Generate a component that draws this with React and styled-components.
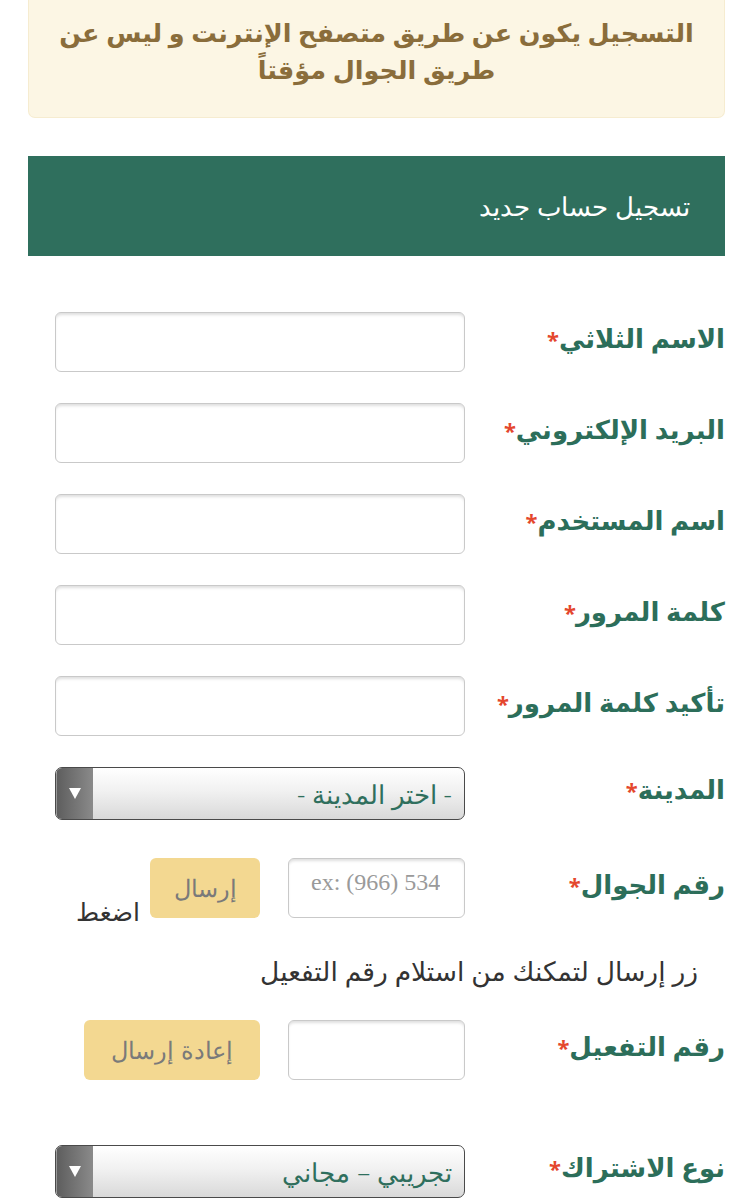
import React from 'react';
import styled, { createGlobalStyle } from 'styled-components';

const GlobalStyle = createGlobalStyle`
  body {
    margin: 0;
    background: #ffffff;
    font-family: "Noto Sans", "DejaVu Sans", sans-serif;
    direction: rtl;
  }
`;

const Page = styled.div`
  width: 697px;
  margin: 0 28px;
`;

const Notice = styled.div`
  background: #fcf6e4;
  border: 1px solid #f6ecd0;
  border-top: none;
  border-radius: 0 0 7px 7px;
  color: #8a6d3b;
  font-weight: bold;
  font-size: 25.5px;
  line-height: 37px;
  text-align: center;
  padding: 14px 26px 29px;
`;

const PanelHead = styled.div`
  margin-top: 38px;
  height: 100px;
  background: #2f6f5d;
  color: #ffffff;
  font-size: 26px;
  font-weight: 300;
  display: flex;
  align-items: center;
  padding-right: 35px;
`;

const Form = styled.div`
  padding-top: 56px;
`;

const Row = styled.div`
  display: flex;
  align-items: ${(p) => (p.$bottom ? 'flex-end' : 'center')};
  margin-bottom: ${(p) => p.$space ?? 31}px;
`;

const Label = styled.label`
  width: 260px;
  flex-shrink: 0;
  color: #2c6e5a;
  font-weight: bold;
  font-size: 26px;
  line-height: 34px;
  align-self: center;
  margin-top: -8px;
`;

const Star = styled.span`
  color: #e4472d;
  font-size: 22px;
`;

const Input = styled.input`
  box-sizing: border-box;
  width: ${(p) => p.$w || 410}px;
  height: 60px;
  border: 1px solid #c9c9c9;
  border-radius: 6px;
  box-shadow: inset 0 3px 3px -1px rgba(0, 0, 0, 0.13);
  padding: 0 24px 12px 22px;
  font-family: "Liberation Serif", serif;
  font-size: 24px;
  direction: ltr;
  text-align: left;
  outline: none;
  &::placeholder {
    color: #9a9a9a;
  }
`;

const Select = styled.div`
  box-sizing: border-box;
  width: 410px;
  height: 53px;
  border: 1.5px solid #4a4a4a;
  border-radius: 7px;
  background: linear-gradient(#ffffff, #f1f1f1 45%, #d9d9d9);
  display: flex;
  align-items: center;
  overflow: hidden;
`;

const SelectText = styled.span`
  flex: 1;
  color: #2f6f5d;
  font-size: 26px;
  font-weight: 300;
  padding-right: 12px;
`;

const Arrow = styled.span`
  width: 36px;
  align-self: stretch;
  background: linear-gradient(90deg, #5e5e5e, #8a8a8a);
  border-left: 1px solid #9a9a9a;
  display: flex;
  align-items: center;
  justify-content: center;
`;

const Button = styled.button`
  box-sizing: border-box;
  width: ${(p) => p.$w}px;
  height: 60px;
  margin-right: 28px;
  background: #f3d891;
  border: none;
  border-radius: 6px;
  color: #7a7a7a;
  font-family: "Noto Sans", "DejaVu Sans", sans-serif;
  font-size: 23.5px;
  font-weight: 300;
`;

const Hint = styled.span`
  color: #333333;
  font-size: 25px;
  margin-right: 10px;
  line-height: 30px;
  margin-bottom: -8px;
`;

const HintLine = styled.div`
  color: #333333;
  font-size: 26.5px;
  line-height: 30px;
  padding-right: 27px;
  margin-top: 38px;
  margin-bottom: 34px;
`;

const Field = ({ label, children, space, bottom }) => (
  <Row $space={space} $bottom={bottom}>
    <Label>
      {label}
      <Star>*</Star>
    </Label>
    {children}
  </Row>
);

const Dropdown = ({ value }) => (
  <Select>
    <SelectText>{value}</SelectText>
    <Arrow>
      <svg width="12" height="11" viewBox="0 0 12 11">
        <polygon points="0,0 12,0 6,11" fill="#ffffff" />
      </svg>
    </Arrow>
  </Select>
);

export default function App() {
  return (
    <Page>
      <GlobalStyle />
      <Notice>التسجيل يكون عن طريق متصفح الإنترنت و ليس عن طريق الجوال مؤقتاً</Notice>
      <PanelHead>تسجيل حساب جديد</PanelHead>
      <Form>
        <Field label="الاسم الثلاثي">
          <Input />
        </Field>
        <Field label="البريد الإلكتروني">
          <Input />
        </Field>
        <Field label="اسم المستخدم">
          <Input />
        </Field>
        <Field label="كلمة المرور">
          <Input type="password" />
        </Field>
        <Field label="تأكيد كلمة المرور">
          <Input type="password" />
        </Field>
        <Field label="المدينة" space={38}>
          <Dropdown value="- اختر المدينة -" />
        </Field>
        <Field label="رقم الجوال" space={0} bottom>
          <Input $w={177} placeholder="ex: (966) 534567890" />
          <Button $w={110}>إرسال</Button>
          <Hint>اضغط</Hint>
        </Field>
        <HintLine>زر إرسال لتمكنك من استلام رقم التفعيل</HintLine>
        <Field label="رقم التفعيل" space={65}>
          <Input $w={177} />
          <Button $w={176}>إعادة إرسال</Button>
        </Field>
        <Field label="نوع الاشتراك">
          <Dropdown value="تجريبي – مجاني" />
        </Field>
      </Form>
    </Page>
  );
}
